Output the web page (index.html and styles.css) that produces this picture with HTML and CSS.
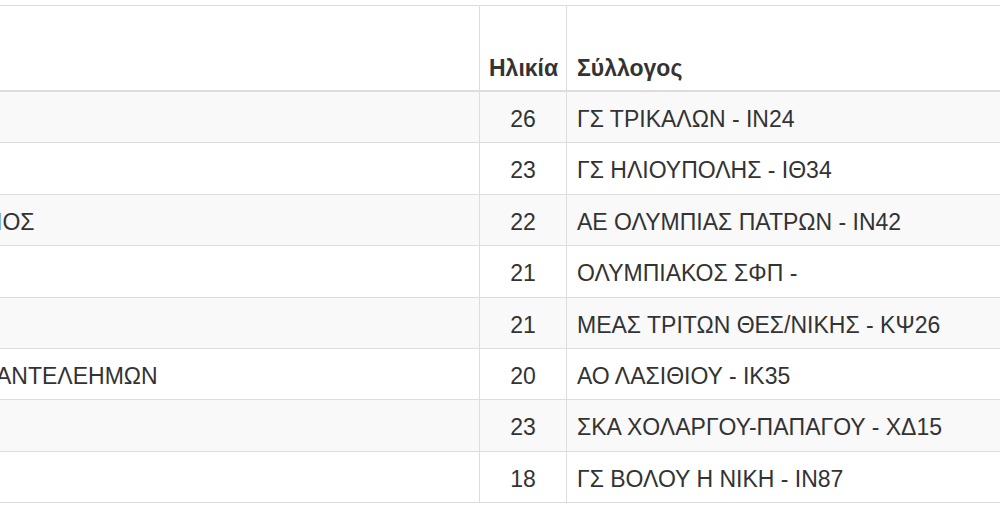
FILE: index.html
```html
<!DOCTYPE html>
<html lang="el">
<head>
<meta charset="utf-8">
<title>Αθλητές</title>
<link rel="stylesheet" href="styles.css">
</head>
<body>
<div class="wrap">
  <table class="results">
    <colgroup>
      <col class="col-name">
      <col class="col-age">
      <col class="col-club">
    </colgroup>
    <thead>
      <tr>
        <th class="name"></th>
        <th class="age">Ηλικία</th>
        <th class="club">Σύλλογος</th>
      </tr>
    </thead>
    <tbody>
      <tr><td class="name"></td><td class="age">26</td><td class="club">ΓΣ ΤΡΙΚΑΛΩΝ - ΙΝ24</td></tr>
      <tr><td class="name"></td><td class="age">23</td><td class="club">ΓΣ ΗΛΙΟΥΠΟΛΗΣ - ΙΘ34</td></tr>
      <tr><td class="name">ΙΟΣ</td><td class="age">22</td><td class="club">ΑΕ ΟΛΥΜΠΙΑΣ ΠΑΤΡΩΝ - ΙΝ42</td></tr>
      <tr><td class="name"></td><td class="age">21</td><td class="club">ΟΛΥΜΠΙΑΚΟΣ ΣΦΠ -</td></tr>
      <tr><td class="name"></td><td class="age">21</td><td class="club">ΜΕΑΣ ΤΡΙΤΩΝ ΘΕΣ/ΝΙΚΗΣ - ΚΨ26</td></tr>
      <tr><td class="name">ΑΝΤΕΛΕΗΜΩΝ</td><td class="age">20</td><td class="club">ΑΟ ΛΑΣΙΘΙΟΥ - ΙΚ35</td></tr>
      <tr><td class="name"></td><td class="age">23</td><td class="club">ΣΚΑ ΧΟΛΑΡΓΟΥ-ΠΑΠΑΓΟΥ - ΧΔ15</td></tr>
      <tr><td class="name"></td><td class="age">18</td><td class="club">ΓΣ ΒΟΛΟΥ Η ΝΙΚΗ - ΙΝ87</td></tr>
    </tbody>
  </table>
</div>
</body>
</html>
```

FILE: styles.css
```css
html, body {
  margin: 0;
  padding: 0;
  background: #fff;
}

body {
  font-family: "Liberation Sans", Arial, sans-serif;
  font-size: 23px;
  color: #333;
  overflow: hidden;
}

.wrap {
  padding-top: 5px;
  width: 1000px;
  overflow: hidden;
}

.results {
  border-collapse: collapse;
  table-layout: fixed;
  width: 1120px;
  margin-left: -12px;
  border: 1px solid #ddd;
}

.col-name { width: 491px; }
.col-age { width: 87px; }
.col-club { width: 542px; }

.results th,
.results td {
  border: 1px solid #ddd;
  padding: 12px 10px 8px 10px;
  line-height: 30.4px;
  white-space: nowrap;
  overflow: hidden;
}

.results th {
  font-weight: bold;
  text-align: left;
  vertical-align: bottom;
  padding-top: 46.5px;
  padding-bottom: 7px;
  border-bottom: 2px solid #ddd;
}

.results td {
  vertical-align: top;
}

.results td.name {
  padding-left: 7px;
}

.results th.age {
  padding-left: 9px;
  padding-right: 8px;
}

.results td.age {
  text-align: center;
}

.results tbody tr:nth-child(odd) {
  background: #f9f9f9;
}
```
